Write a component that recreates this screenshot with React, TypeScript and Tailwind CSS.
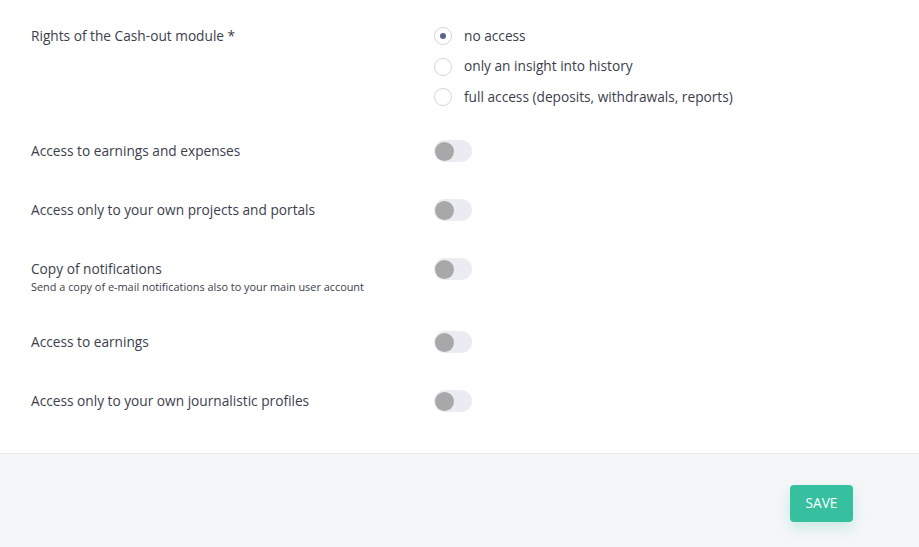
import React, { useState } from "react";

const radioOptions = [
  "no access",
  "only an insight into history",
  "full access (deposits, withdrawals, reports)",
];

function Toggle({ on, onClick }: { on: boolean; onClick: () => void }) {
  return (
    <button
      type="button"
      onClick={onClick}
      className={`relative h-[22px] w-[38px] shrink-0 rounded-full ${
        on ? "bg-[#bfe9dd]" : "bg-[#ebebf2]"
      }`}
    >
      <span
        className={`absolute top-[1.5px] h-[19px] w-[19px] rounded-full ${
          on ? "left-[18px] bg-[#36c0a0]" : "left-[1px] bg-[#a8a8a8]"
        }`}
      />
    </button>
  );
}

function ToggleRow({
  label,
  hint,
  className,
}: {
  label: string;
  hint?: string;
  className: string;
}) {
  const [on, setOn] = useState(false);
  return (
    <div className={`flex items-start ${className}`}>
      <div className="w-[403px] shrink-0">
        <p className="pt-px text-[13.7px] leading-5">{label}</p>
        {hint && <p className="text-[10.9px] leading-4">{hint}</p>}
      </div>
      <Toggle on={on} onClick={() => setOn(!on)} />
    </div>
  );
}

export default function App() {
  const [right, setRight] = useState(0);

  return (
    <div
      className="flex min-h-screen w-full flex-col bg-white text-[#3b3e4c]"
      style={{ fontFamily: '"Open Sans", sans-serif' }}
    >
      <section className="px-[31px] pb-[41px] pt-[26px]">
        <div className="flex items-start">
          <p className="w-[403px] shrink-0 text-[13.7px] leading-5">
            Rights of the Cash-out module *
          </p>
          <div className="flex flex-col gap-[10.5px]">
            {radioOptions.map((option, i) => (
              <label
                key={option}
                className="flex h-5 cursor-pointer items-center gap-[12px] text-[13.7px]"
                onClick={() => setRight(i)}
              >
                <span className="flex h-[18px] w-[18px] items-center justify-center rounded-full border border-[#d3d6df] bg-white">
                  {right === i && (
                    <span className="h-[6px] w-[6px] rounded-full bg-[#5a6390]" />
                  )}
                </span>
                {option}
              </label>
            ))}
          </div>
        </div>

        <ToggleRow className="mt-[33px]" label="Access to earnings and expenses" />
        <ToggleRow
          className="mt-[37px]"
          label="Access only to your own projects and portals"
        />
        <ToggleRow
          className="mt-[37px]"
          label="Copy of notifications"
          hint="Send a copy of e-mail notifications also to your main user account"
        />
        <ToggleRow className="mt-[36px]" label="Access to earnings" />
        <ToggleRow
          className="mt-[37px]"
          label="Access only to your own journalistic profiles"
        />
      </section>

      <footer className="flex flex-1 justify-end border-t border-[#e8e9ee] bg-[#f5f6f8] pr-[66px] pt-[31px]">
        <button
          type="button"
          className="h-[37px] w-[63px] rounded-[4px] bg-[#36c0a0] text-[13.7px] text-white shadow-[0_6px_14px_rgba(54,192,160,0.22)]"
        >
          SAVE
        </button>
      </footer>
    </div>
  );
}
